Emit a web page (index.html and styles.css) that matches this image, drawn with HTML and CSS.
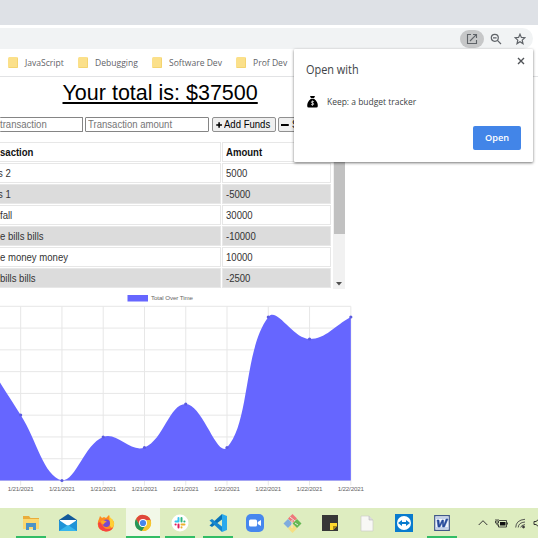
FILE: index.html
```
<!DOCTYPE html>
<html lang="en">
<head>
<meta charset="utf-8">
<title>Budget tracker</title>
<link rel="stylesheet" href="styles.css">
</head>
<body>
<div class="tabstrip"></div>
<div class="toolbar">
  <div class="omnibox">
    <span class="action active"><svg width="12" height="12" viewBox="0 0 12 12" fill="none" stroke="#5f6368" stroke-width="1.1"><path d="M5 1.5H1.5v9h9V7M7 1.5h3.5V5M10.300 1.700 4 8"/></svg></span>
    <span class="action"><svg width="12" height="12" viewBox="0 0 12 12" fill="none" stroke="#5f6368" stroke-width="1.200"><circle cx="4.800" cy="4.800" r="3.500"/><path d="M7.400 7.400 11 11M3 4.800h3.600"/></svg></span>
    <span class="action"><svg width="12" height="12" viewBox="0 0 12 12" fill="none" stroke="#5f6368" stroke-width="1.200"><path d="m6 1.200 1.400 3.200 3.500.3-2.700 2.400.8 3.500-3-1.900-3 1.900.8-3.500-2.700-2.400 3.500-.3z"/></svg></span>
  </div>
</div>
<nav class="bookmarks">
  <a class="bm b1"><i></i><span>JavaScript</span></a>
  <a class="bm b2"><i></i><span>Debugging</span></a>
  <a class="bm b3"><i></i><span>Software Dev</span></a>
  <a class="bm b4"><i></i><span>Prof Dev</span></a>
</nav>
<main>
  <h1>Your total is: <span>$37500</span></h1>
  <div class="form">
    <div class="field first"><span>transaction</span></div>
    <div class="field second"><span>Transaction amount</span></div>
    <div class="btn"><svg width="8" height="8" viewBox="0 0 8 8"><path d="M4 .3v7.400M.3 4h7.400" stroke="#000" stroke-width="2"/></svg><span>Add Funds</span></div>
    <div class="btn sub"><svg width="8" height="8" viewBox="0 0 8 8"><path d="M0 4h8" stroke="#000" stroke-width="2"/></svg><span>Subtract Funds</span></div>
  </div>
  <div class="scroller">
    <div class="table">
      <div class="row head"><div class="name"><span>saction</span></div><div class="amt"><span>Amount</span></div></div>
      <div class="row"><div class="name cut"><span>s 2</span></div><div class="amt"><span>5000</span></div></div>
      <div class="row alt"><div class="name cut"><span>s 1</span></div><div class="amt"><span>-5000</span></div></div>
      <div class="row"><div class="name"><span>fall</span></div><div class="amt"><span>30000</span></div></div>
      <div class="row alt"><div class="name"><span>e bills bills</span></div><div class="amt"><span>-10000</span></div></div>
      <div class="row"><div class="name"><span>e money money</span></div><div class="amt"><span>10000</span></div></div>
      <div class="row alt"><div class="name"><span>bills bills</span></div><div class="amt"><span>-2500</span></div></div>
    </div>
    <div class="track"><div class="thumb"></div><svg width="6" height="4" viewBox="0 0 6 4"><path d="M0 0h6L3 3.500z" fill="#505050"/></svg></div>
  </div>
  <svg class="chart" id="chart" width="380" height="219" viewBox="0 289 380 219"></svg>
</main>
<footer class="taskbar">
  <div class="app run"><svg width="18" height="18" viewBox="0 0 18 18"><path d="M1 2h6l1.500 2H17v11H1z" fill="#e9ad3b"/><path d="M1 5h16v10H1z" fill="#fbd870"/><path d="M4 16V9h10v7h-3v-3H7v3z" fill="#4c93c7"/></svg></div>
  <div class="app"><svg width="20" height="18" viewBox="0 0 20 18"><path d="M1 6 10 0l9 6v3H1z" fill="#12599a"/><path d="M2 6h16v6H2z" fill="#fff"/><path d="m1 6 9 6 9-6v11H1z" fill="#2093d7"/><path d="m1 17 9-6 9 6z" fill="#37b5ec"/></svg></div>
  <div class="app"><svg width="18" height="18" viewBox="0 0 18 18"><path d="M2 5 3 2l2 2 2-1 2 1 3-3 1 3q5 3 4 7-1 6-8 6.500Q1 17 .7 10q0-3 1.300-5z" fill="#ff8b20"/><path d="M12 1q1 3 3.500 4.500Q19 11 15 14l-2-2z" fill="#ffcf35"/><path d="M1 9q0 8 8 8.500 5 0 7-4-6 3-9 0L3 8z" fill="#f64343"/><circle cx="9.300" cy="9.200" r="3.700" fill="#7749cf"/><path d="M4 7q3-2 6 1-3 0-3 2.500Q4 10 4 7z" fill="#ffa727"/></svg></div>
  <div class="app run current"><svg width="18" height="18" viewBox="0 0 18 18"><circle cx="9" cy="9" r="8" fill="#f5c62f"/><path d="M9 9H17A8 8 0 0 0 2 5l3.500 6z" fill="#df473b"/><path d="M2 5a8 8 0 0 0 6 12l4-6.500L9 13l-3.500-2z" fill="#27965a"/><path d="M8 17A8 8 0 0 0 16.500 6H9l3 5z" fill="#f5c62f"/><circle cx="9" cy="9" r="4" fill="#fff"/><circle cx="9" cy="9" r="3.100" fill="#4686ed"/></svg></div>
  <div class="app run"><svg width="18" height="18" viewBox="0 0 18 18" fill="none" stroke-width="2" stroke-linecap="round"><circle cx="9" cy="9" r="8.500" fill="#fff"/><path d="M7.500 4v3.500M4.500 7.500h2" stroke="#36c5f0"/><path d="M10.500 4v3.500M13.500 7.500h-.2" stroke="#2eb67d"/><path d="M10.500 10.500h3M10.500 13.500v-.2" stroke="#ecb22e"/><path d="M7.500 10.500v3M4.500 10.500h.2" stroke="#e01e5a"/></svg></div>
  <div class="app run"><svg width="18" height="18" viewBox="0 0 18 18"><path d="M13 0v5.500L3 13l-2.500-1.500z" fill="#0872b8"/><path d="M13 18v-5.500L3 5 .5 6.500z" fill="#1687cf"/><path d="m13 0 5 2v14l-5 2z" fill="#29a9ed"/></svg></div>
  <div class="app"><svg width="18" height="18" viewBox="0 0 18 18"><rect width="18" height="18" rx="5" fill="#4687ee"/><rect x="3" y="5.500" width="8" height="7" rx="1.500" fill="#fff"/><path d="m11.700 8 3.300-2v6l-3.300-2z" fill="#fff"/></svg></div>
  <div class="app"><svg width="19" height="19" viewBox="0 0 19 19"><path d="m9.500 0 4.500 4.500L9.500 9 5 4.500z" fill="#ef777a"/><path d="M5 5l4.500 4.500L5 14 .5 9.500z" fill="#7facde"/><path d="m14 5 4.500 4.500L14 14 9.500 9.500z" fill="#65b853"/><path d="m9.500 10 4.500 4.500L9.500 19 5 14.500z" fill="#f5df83"/><path d="m7 3 5 4M12 9l3 2M9 6v8" stroke="#e8e8df" fill="none"/></svg></div>
  <div class="app"><svg width="16" height="16" viewBox="0 0 16 16"><path d="M0 0h16v16H0z" fill="#373737"/><path d="M8 8h7v3l-4 4H8z" fill="#ffd92f"/><path d="M15 11h-4v4z" fill="#a88a18"/></svg></div>
  <div class="app"><svg width="14" height="17" viewBox="0 0 14 17"><path d="M1 1h8l4 4v11H1z" fill="#f8f8f5" stroke="#cfcfc8" stroke-width=".7"/><path d="M9 1v4h4" fill="#ddd" stroke="#bbb" stroke-width=".6"/></svg></div>
  <div class="app"><svg width="18" height="18" viewBox="0 0 18 18"><path d="M0 0h18v18H0z" fill="#087bce"/><circle cx="9" cy="9" r="7" fill="#fff"/><path d="m3 9 4-3v2h4V6l4 3-4 3v-2H7v2z" fill="#087bce"/></svg></div>
  <div class="app run"><svg width="16" height="16" viewBox="0 0 16 16"><path d="M.7.700h14.600v14.600H.7z" fill="#eef4fc" stroke="#405889" stroke-width="1.200"/><path d="M2 3h12M2 13h12" stroke="#9aafd6"/><path d="M3 5h2l.5 5L8 5h1.500l.3 5L12 4h2l-3.500 8H8.600l-.4-4.500L6 12H4z" fill="#264a9a" stroke="#264a9a" stroke-width=".5"/></svg></div>
  <div class="tray">
    <svg width="10" height="10" viewBox="0 0 10 10" fill="none" stroke="#333"><path d="m.7 7 4.300-4.300L9.300 7"/></svg>
    <svg width="13" height="10" viewBox="0 0 13 10"><path d="M5 4h5.500v3.500H5z" fill="#111"/><path d="M4 2.500h7.500V9h-8V6.500M12.500 4.500v2M1 1v1.500m2-1.500v1.500M.5 3h3v2h-3zM2 5v2h1.500" stroke="#222" stroke-width=".8" fill="none"/></svg>
    <svg width="11" height="11" viewBox="0 0 11 11" fill="none" stroke="#444" stroke-width=".9"><path d="M.7 9.500Q1 2 10 1.300M3.200 9.500Q3.500 4.500 10 4M5.700 9.500Q6 7 10 6.600"/><circle cx="8.500" cy="9" r="1" fill="#222"/></svg>
    <svg width="7" height="10" viewBox="0 0 7 10" fill="none" stroke="#333"><path d="M1 3.500h2L6 1v8L3 6.500H1z"/></svg>
  </div>
</footer>
<section class="popup">
  <svg class="close" width="8" height="8" viewBox="0 0 8 8"><path d="m1 1 6 6M7 1 1 7" stroke="#505357" stroke-width="1.400"/></svg>
  <h2><span>Open with</span></h2>
  <div class="choice"><svg width="11" height="12" viewBox="0 0 11 12"><path d="M3 0h5L7 2.300H4z"/><path d="M3.700 3h3.600Q11 6 10.800 10q0 1.500-1.500 1.500H1.700Q.2 11.500.2 10 0 6 3.700 3z"/><path d="M7 5.700Q4.200 4.700 4.200 6q0 .9 1.300 1 1.400.2 1.300 1.200Q6.500 9.500 4 8.500M5.500 4.500v5.200" fill="none" stroke="#ddd" stroke-width=".8"/></svg><span>Keep: a budget tracker</span></div>
  <div class="open">Open</div>
</section>
<script src="chart.js"></script>
</body>
</html>
```
FILE: styles.css
```
* { box-sizing: border-box; }
body { margin: 0; width: 538px; height: 538px; overflow: hidden; position: relative; background: #fff; font-family: "Liberation Sans", Arial, sans-serif; color: #222; }
.tabstrip { height: 25px; background: #dee1e6; }
.toolbar { height: 24px; padding: 3px 5px 0 0; }
.omnibox { height: 21px; background: #f1f3f4; border-radius: 0 11px 11px 0; display: flex; justify-content: flex-end; align-items: center; padding-right: 1px; }
.action { width: 24px; height: 18px; border-radius: 9px; display: flex; align-items: center; justify-content: center; }
.action.active { background: #c6c7c8; }
.bookmarks { height: 28px; border-bottom: 1px solid #e2e3e5; display: flex; align-items: center; padding-left: 8px; font: 9.3px/14px "Open Sans", sans-serif; color: #5f6368; white-space: nowrap; }
.bm { display: flex; align-items: center; gap: 7px; flex: none; }
.bm i { width: 10px; height: 11px; background: #fbe08a; border-radius: 1.5px; border-right: 1px solid #f4d470; border-bottom: 1px solid #f4d470; }
.bm span { transform-origin: 0 50%; transform: scaleX(.92); }
.b1 { width: 69.5px; }
.b2 { width: 74.5px; }
.b3 { width: 83.5px; }
main { height: 431px; }
h1 { margin: 0; height: 40px; padding: 3px 0 0 62.5px; font-weight: 400; font-size: 21.5px; line-height: 26px; color: #000; text-decoration: underline; text-decoration-thickness: 2px; text-underline-offset: 2px; white-space: nowrap; }
.form { display: flex; height: 24.5px; gap: 2.5px; font-size: 10.5px; line-height: 13px; white-space: nowrap; }
.form span, .row span { display: inline-block; transform: scaleX(.91); transform-origin: 0 50%; }
.field { height: 15px; border: 1px solid #858585; border-radius: 1px; color: #757575; }
.first { width: 82.5px; border-left: 0; }
.second { width: 124px; padding-left: 1.5px; }
.btn { height: 15px; width: 64px; border: 1px solid #909090; border-radius: 2px; background: #efefef; display: flex; align-items: center; gap: 2px; padding-left: 3px; color: #000; flex: none; }
.btn.sub { width: 86px; padding-left: 2px; gap: 3px; }
.scroller { display: flex; height: 147.5px; overflow: hidden; width: 345px; }
.table { width: 333px; display: flex; flex-direction: column; gap: 1px; }
.row { display: flex; gap: 1.5px; height: 20px; flex: none; width: 331px; font-size: 10.5px; line-height: 19px; color: #333; }
.row > div { border: 1px solid #e7e7e7; }
.row.head { font-weight: 700; color: #111; line-height: 18px; height: 20px; }
.row > .name { width: 220.5px; white-space: nowrap; border-left: 0; }
.name.cut span { margin-left: -2px; }
.amt { width: 109px; padding-left: 3px; }
.alt > div { background: #dcdcdc; }
.track { width: 12px; background: #f1f1f1; display: flex; flex-direction: column; align-items: center; }
.thumb { width: 11px; height: 92px; background: #c1c1c1; margin-bottom: 48px; flex: none; }
.chart { display: block; font-family: "Liberation Sans", Arial, sans-serif; font-size: 6.2px; fill: #666; }
.taskbar { height: 30px; background: #deedc0; display: flex; padding-left: 12.3px; overflow: hidden; }
.app { width: 37.35px; flex: none; display: flex; align-items: center; justify-content: center; }
.app.run { background: linear-gradient(#32bd65, #32bd65) center bottom / 30px 2px no-repeat; }
.app.current { background: linear-gradient(#32bd65, #32bd65) center bottom / 34px 2px no-repeat, linear-gradient(#f2f8e8, #f2f8e8) center / 34px 30px no-repeat; }
.tray { display: flex; align-items: center; gap: 7px; margin-left: 18px; }
.tray svg { flex: none; }
.popup { position: absolute; left: 294px; top: 49px; width: 239px; height: 113px; background: #fff; border-radius: 1px; box-shadow: 0 1px 3px rgba(0,0,0,.55); font-family: "Open Sans", sans-serif; color: #404346; }
.close { position: absolute; right: 8.5px; top: 8px; }
h2 { margin: 0; padding: 13px 0 0 11.5px; font-size: 12px; font-weight: 400; line-height: 16px; height: 45px; }
h2 span, .choice span { display: inline-block; transform: scaleX(.91); transform-origin: 0 50%; white-space: nowrap; }
.choice { display: flex; align-items: center; height: 15px; padding-left: 13px; gap: 9px; font-size: 9.3px; }
.open { margin: 17px 0 0 179px; width: 48px; height: 24px; border-radius: 2px; background: #4285e8; color: #fff; font-size: 9.2px; font-weight: 600; line-height: 24px; text-align: center; }
```
FILE: chart.js
```
const step = 41.27;
const pts = [350, 415, 480.5, 437, 447.5, 404, 447.5, 317, 339, 317].map((y, i) => ({ x: -20.6 + i * step, y }));
const yTop = 306.3, yBase = 480.5;
const clamp = y => Math.max(yTop, Math.min(yBase, y));

// Smooth each joint in proportion to the lengths of its two segments.
pts.forEach((p, i) => {
  const a = pts[i - 1] || p, b = pts[i + 1] || p;
  const da = Math.hypot(p.x - a.x, p.y - a.y), db = Math.hypot(b.x - p.x, b.y - p.y);
  const fa = 0.4 * da / (da + db), fb = 0.4 * db / (da + db);
  p.inn = [p.x - fa * (b.x - a.x), clamp(p.y - fa * (b.y - a.y))];
  p.out = [p.x + fb * (b.x - a.x), clamp(p.y + fb * (b.y - a.y))];
});

let out = '';
for (let i = 0; i < 9; i++) {
  const y = yTop + i * (yBase - yTop) / 8;
  out += `<path d="M0 ${y}H350.8" stroke="#e7e7e7"/>`;
}
pts.forEach(p => { out += `<path d="M${p.x} ${yTop}V485.5" stroke="#e7e7e7"/>`; });
let d = `M${pts[0].x} ${yBase}V${pts[0].y}`;
for (let i = 1; i < pts.length; i++) d += `C${pts[i - 1].out} ${pts[i].inn} ${pts[i].x} ${pts[i].y}`;
out += `<path d="${d}V${yBase}z" fill="#6666ff"/>`;
pts.forEach((p, i) => {
  out += `<circle cx="${p.x}" cy="${p.y}" r="1.6" fill="#5b5be0"/>`;
  if (i) out += `<text x="${p.x}" y="491" text-anchor="middle" textLength="26">1/${i < 6 ? 21 : 22}/2021</text>`;
});
out += '<rect x="127.5" y="295" width="20.5" height="6.5" fill="#6666ff"/><text x="151" y="300" textLength="42">Total Over Time</text>';
document.getElementById('chart').innerHTML = out;
```
